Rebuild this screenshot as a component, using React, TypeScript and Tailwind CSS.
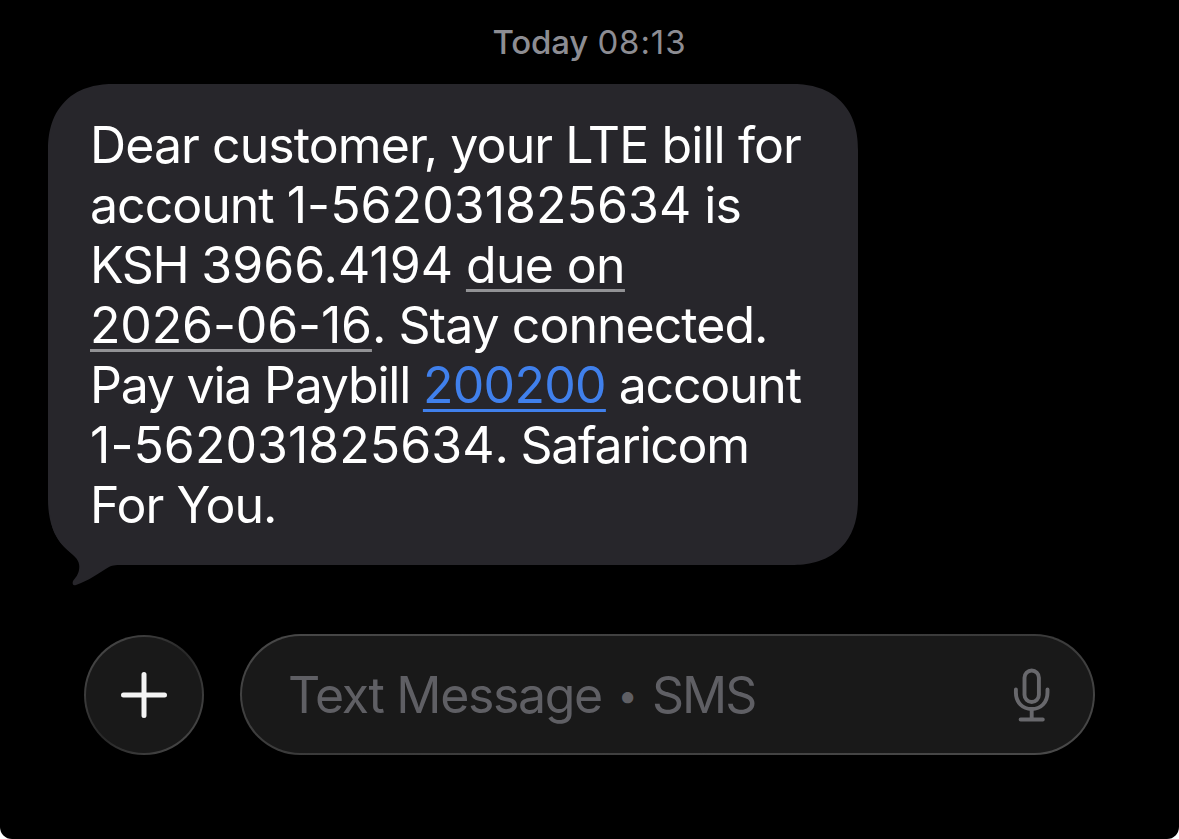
import { ReactNode } from "react";

const lines: { content: ReactNode; className: string }[] = [
  {
    content: "Dear customer, your LTE bill for",
    className: "tracking-[-0.92px]",
  },
  {
    content: (
      <>
        account <Digits>1-562031825634</Digits> is
      </>
    ),
    className: "tracking-[-1px]",
  },
  {
    content: (
      <>
        KSH <Digits>3966.4194</Digits> <DateLink>due on</DateLink>
      </>
    ),
    className: "tracking-[-1.3px]",
  },
  {
    content: (
      <>
        <DateLink>
          <span className="tracking-[-0.15px]">2026-06-16</span>
        </DateLink>
        . Stay connected.
      </>
    ),
    className: "tracking-[-0.97px]",
  },
  {
    content: (
      <>
        Pay via Paybill{" "}
        <a className="tracking-[-0.7px] text-[#4080ec] underline decoration-[3px] underline-offset-[6px] [text-decoration-skip-ink:none]">
          200200
        </a>{" "}
        account
      </>
    ),
    className: "tracking-[-1.22px]",
  },
  {
    content: (
      <>
        <Digits>1-562031825634</Digits>. Safaricom
      </>
    ),
    className: "tracking-[-1.3px]",
  },
  { content: "For You.", className: "tracking-[-1px]" },
];

function Digits({ children }: { children: ReactNode }) {
  return <span className="tracking-[0.04px]">{children}</span>;
}

function DateLink({ children }: { children: ReactNode }) {
  return (
    <span className="tracking-[-0.65px] underline decoration-[#929295] decoration-[3px] underline-offset-[6px] [text-decoration-skip-ink:none]">
      {children}
    </span>
  );
}

const MessageBubble = () => {
  return (
    <div className="relative isolate ml-12 w-[810px] h-[481px] pt-[31px] pl-[42px] rounded-[66px] [corner-shape:superellipse(1.2)] bg-[#27262b]">
      {lines.map((line, idx) => (
        <p
          key={idx}
          className={`h-[60px] text-[50px] leading-[60px] whitespace-nowrap text-white ${line.className}`}
        >
          {line.content}
        </p>
      ))}
      <svg
        className="absolute left-0 top-[420px] -z-10"
        width="90"
        height="84"
        viewBox="0 0 90 84"
        fill="#27262b"
      >
        <path d="M1.5 6C2.5 17 4 24 7 30C12 40 18 45 25 51C31 56 32 61 31 66C30 71 28 73 25 77C24 80 25 82 28 81C40 77 51 69 61 63C65 61 69 61 76 61L76 6Z" />
      </svg>
    </div>
  );
};

const MicIcon = () => {
  return (
    <svg
      width="38"
      height="56"
      viewBox="0 0 38 56"
      fill="none"
      stroke="#68686c"
      strokeWidth="3.9"
      strokeLinecap="round"
    >
      <rect x="11.5" y="3.5" width="14.4" height="31.5" rx="7.2" />
      <path d="M2.9 22.5V25.5C2.9 35.5 9.5 42 18.7 42S34.5 35.5 34.5 25.5V22.5" />
      <path d="M18.7 42V52.5M7.6 52.5H29.8" />
    </svg>
  );
};

const Composer = () => {
  return (
    <div className="mt-[69px] ml-[84px] flex items-center gap-9">
      <button className="w-[120px] h-[120px] rounded-full p-[2px] bg-linear-135 from-[#505050] via-[#282828] to-[#505050]">
        <span className="flex w-full h-full items-center justify-center rounded-full bg-[#191919]">
          <svg
            width="48"
            height="48"
            viewBox="0 0 48 48"
            stroke="#f4f4f4"
            strokeWidth="5"
            strokeLinecap="round"
          >
            <path d="M24 3.5V44.5M3.5 24H44.5" />
          </svg>
        </span>
      </button>
      <div className="w-[855px] h-[121px] rounded-full p-[2px] bg-linear-170 from-[#484848] via-[#3a3a3a] to-[#4a4a4a]">
        <div className="flex w-full h-full items-center justify-between rounded-full bg-[#191919] pl-[46px] pr-[42px]">
          <span className="flex items-center text-[50px] leading-[60px] tracking-[-1.35px] whitespace-nowrap text-[#5f5f64]">
            Text Message
            <span className="w-[50px] text-center text-[36px]">•</span>
            <span className="tracking-[-2px]">SMS</span>
          </span>
          <MicIcon />
        </div>
      </div>
    </div>
  );
};

export default function App() {
  return (
    <div className="w-[1179px] h-[839px] bg-white">
      <div className="w-full h-full overflow-hidden rounded-b-[12px] bg-black font-['Inter','Liberation_Sans',sans-serif]">
        <p className="h-[84px] pt-[22px] text-center text-[33px] leading-10 text-[#8d8d93]">
          <span className="font-medium tracking-[-0.2px]">Today</span>{" "}
          <span className="tracking-[0.9px]">08:13</span>
        </p>
        <MessageBubble />
        <Composer />
      </div>
    </div>
  );
}
